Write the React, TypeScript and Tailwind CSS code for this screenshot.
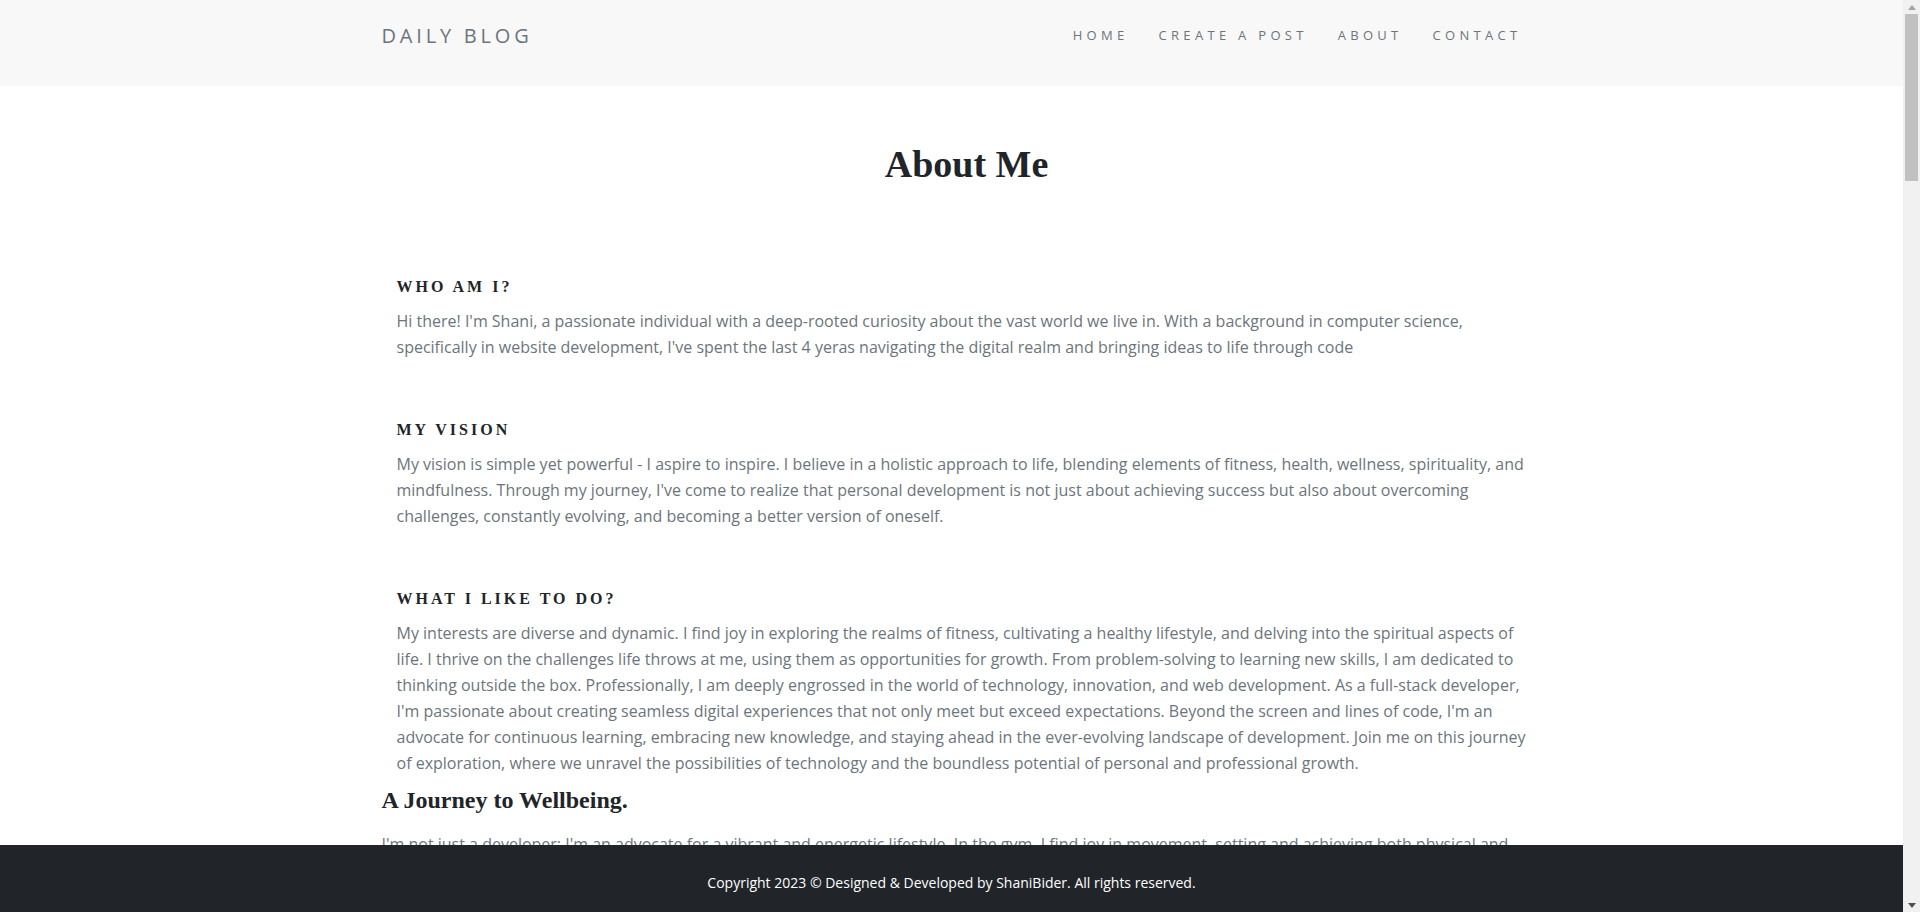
import React from "react";

interface Section {
    title: string,
    text: string,
}

const sections: Section[] = [
    {
        title: "Who am I?",
        text: "Hi there! I'm Shani, a passionate individual with a deep-rooted curiosity about the vast world we live in. With a background in computer science, specifically in website development, I've spent the last 4 yeras navigating the digital realm and bringing ideas to life through code",
    },
    {
        title: "My Vision",
        text: "My vision is simple yet powerful - I aspire to inspire. I believe in a holistic approach to life, blending elements of fitness, health, wellness, spirituality, and mindfulness. Through my journey, I've come to realize that personal development is not just about achieving success but also about overcoming challenges, constantly evolving, and becoming a better version of oneself.",
    },
    {
        title: "What I like to do?",
        text: "My interests are diverse and dynamic. I find joy in exploring the realms of fitness, cultivating a healthy lifestyle, and delving into the spiritual aspects of life. I thrive on the challenges life throws at me, using them as opportunities for growth. From problem-solving to learning new skills, I am dedicated to thinking outside the box. Professionally, I am deeply engrossed in the world of technology, innovation, and web development. As a full-stack developer, I'm passionate about creating seamless digital experiences that not only meet but exceed expectations. Beyond the screen and lines of code, I'm an advocate for continuous learning, embracing new knowledge, and staying ahead in the ever-evolving landscape of development. Join me on this journey of exploration, where we unravel the possibilities of technology and the boundless potential of personal and professional growth.",
    },
];

const links = ["Home", "Create a post", "About", "Contact"];

function Header() {
    return (
        <header className="h-[86px] bg-[#f8f8f8]">
            <div className="w-[1140px] mx-auto h-[71px] flex items-center justify-between">
                <a className="text-[20px] leading-none tracking-[3.8px] uppercase text-[#6c757d]">Daily Blog</a>
                <nav className="flex gap-[30px]">
                    {links.map((link, index) => (
                        <a key={index} className="text-[13px] leading-none tracking-[4.3px] uppercase text-[#6c757d]">
                            {link}
                        </a>
                    ))}
                </nav>
            </div>
        </header>
    )
}

// browser scrollbar as it shows in the screenshot
function ScrollBar() {
    return (
        <div className="fixed top-0 right-0 w-[17px] h-full bg-[#f1f1f1] flex flex-col items-center">
            <div className="h-[14px] flex items-center justify-center">
                <svg width="8" height="5" viewBox="0 0 8 5"><path d="M4 0L8 5H0z" fill="#a3a3a3" /></svg>
            </div>
            <div className="w-[13px] h-[167px] bg-[#c1c1c1]"></div>
            <div className="flex-1"></div>
            <div className="h-[14px] flex items-center justify-center">
                <svg width="8" height="5" viewBox="0 0 8 5"><path d="M0 0H8L4 5z" fill="#505050" /></svg>
            </div>
        </div>
    )
}

export default function App() {
    return (
        <div className="min-h-[4766px] pr-[17px] bg-white font-['Open_Sans',sans-serif]">
            <Header />
            <main className="w-[1140px] mx-auto">
                <h1 className="mt-[56px] pl-[30px] text-center text-[38px] leading-[1.2] font-bold text-[#212529] font-['Liberation_Serif',serif]">
                    About Me
                </h1>
                <div className="mt-[89px] ml-[15px] w-[1130px]">
                    {sections.map((section, index) => (
                        <div key={index} className={index > 0 ? "mt-[60px]" : ""}>
                            <h5 className="text-[16px] leading-[1.2] font-bold uppercase tracking-[3px] text-[#212529] font-['Liberation_Serif',serif]">
                                {section.title}
                            </h5>
                            <p className="mt-3 text-[16px] leading-[26px] text-[#6c757d]">{section.text}</p>
                        </div>
                    ))}
                </div>
                <h3 className="mt-[10px] text-[24px] leading-[1.2] font-bold text-[#212529] font-['Liberation_Serif',serif]">
                    A Journey to Wellbeing.
                </h3>
                <p className="mt-4 text-[16px] leading-[26px] text-[#6c757d]">
                    I'm not just a developer; I'm an advocate for a vibrant and energetic lifestyle. In the gym, I find joy in movement, setting and achieving both physical and mental goals. Every workout is a reminder that consistency and patience turn small steps into lasting change, and that a strong body supports a clear and focused mind.
                </p>
            </main>
            <footer className="fixed bottom-0 left-0 right-[17px] h-[67px] bg-[#212529] pt-[28px]">
                <p className="text-center text-[14px] leading-[19px] text-white">
                    Copyright 2023 © Designed &amp; Developed by ShaniBider. All rights reserved.
                </p>
            </footer>
            <ScrollBar />
        </div>
    )
}
